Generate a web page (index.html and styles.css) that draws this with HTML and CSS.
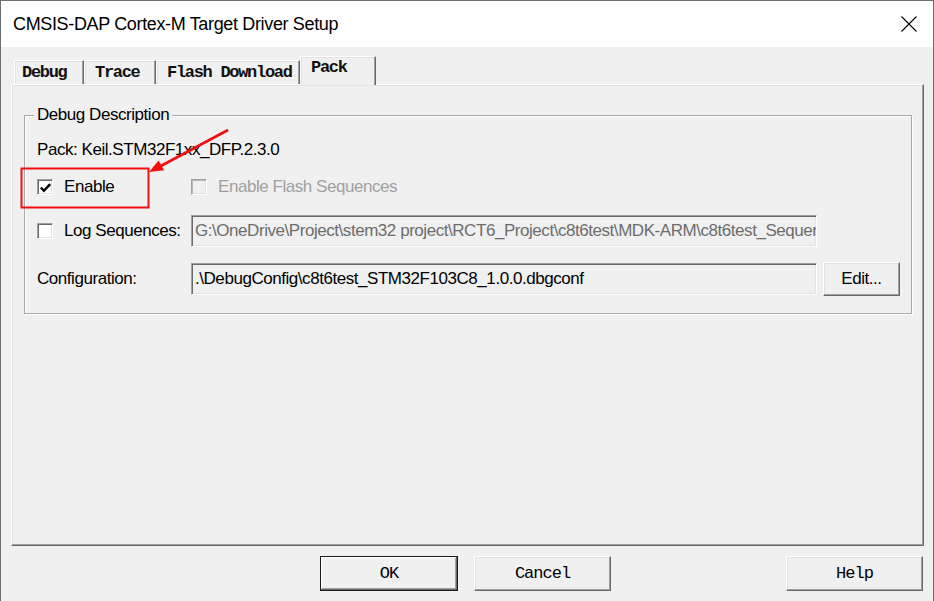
FILE: index.html
```html
<!DOCTYPE html>
<html>
<head>
<meta charset="utf-8">
<link rel="stylesheet" href="styles.css">
</head>
<body>
<div class="window">
  <div class="titlebar">
    <span class="title">CMSIS-DAP Cortex-M Target Driver Setup</span>
    <svg class="close" width="16" height="16" viewBox="0 0 16 16"><path d="M0.5 0.5 L15.5 15.5 M15.5 0.5 L0.5 15.5" stroke="#000" stroke-width="1.1" fill="none"/></svg>
  </div>
  <div class="content">
    <div class="tabs">
      <div class="tab t-debug">Debug</div>
      <div class="tab t-trace">Trace</div>
      <div class="tab t-flash">Flash Download</div>
      <div class="tab t-pack active">Pack</div>
    </div>
    <div class="panel">
      <div class="group">
        <span class="legend">Debug Description</span>
        <div class="grid">
          <div class="pack">Pack: Keil.STM32F1xx_DFP.2.3.0</div>
          <div class="check"><span class="box"><svg width="14" height="14" viewBox="0 0 14 14"><path d="M2 6.5 L5.3 10 L12 2.8" stroke="#000" stroke-width="2.6" fill="none"/></svg></span>Enable</div>
          <div class="check disabled"><span class="box"></span>Enable Flash Sequences</div>
          <div class="check"><span class="box"></span>Log Sequences:</div>
          <div class="field gray">G:\OneDrive\Project\stem32 project\RCT6_Project\c8t6test\MDK-ARM\c8t6test_Sequences.log</div>
          <div class="label">Configuration:</div>
          <div class="field">.\DebugConfig\c8t6test_STM32F103C8_1.0.0.dbgconf</div>
          <div class="btn edit">Edit...</div>
        </div>
      </div>
    </div>
    <div class="buttons">
      <div class="btn big default">OK</div>
      <div class="btn big">Cancel</div>
      <div class="btn big help">Help</div>
    </div>
  </div>
</div>
<svg class="annot" width="934" height="601" viewBox="0 0 934 601">
  <rect x="21.5" y="168.5" width="127" height="39" fill="none" stroke="#f01010" stroke-width="2"/>
  <line x1="228" y1="130" x2="158" y2="167.5" stroke="#f01010" stroke-width="2.6"/>
  <polygon points="149,172 164.2,170.2 158.6,160.6" fill="#f01010"/>
</svg>
</body>
</html>
```
FILE: styles.css
```css
html, body {
  margin: 0;
  padding: 0;
  background: #f0f0f0;
}
.window {
  width: 934px;
  height: 601px;
  box-sizing: border-box;
  border: 1px solid #6f6f6f;
  border-bottom: none;
  background: #f0f0f0;
  font-family: "Liberation Sans", Arial, sans-serif;
  color: #000;
}
.titlebar {
  height: 46px;
  background: #fff;
  display: flex;
  align-items: center;
  justify-content: space-between;
  padding: 0 16px 0 12px;
}
.title {
  font-size: 18px;
  letter-spacing: -0.35px;
}
.close {
  display: block;
  margin-top: -1px;
}
.content {
  padding: 9px 9px 0 10px;
}
.tabs {
  display: flex;
  align-items: flex-end;
  height: 28px;
  padding-left: 3px;
}
.tab {
  box-sizing: border-box;
  height: 24px;
  border-top: 1px solid #fff;
  border-left: 1px solid #fff;
  border-right: 1px solid #696969;
  box-shadow: inset -1px 0 0 #a0a0a0, inset 1px 1px 0 #e3e3e3;
  background: #f0f0f0;
  font-family: "Liberation Mono", "Courier New", monospace;
  font-weight: bold;
  font-size: 17px;
  letter-spacing: -1.3px;
  line-height: 20px;
  padding-top: 2px;
  padding-left: 10px;
  white-space: nowrap;
  color: #111;
}
.t-debug { width: 70px; padding-left: 7px; }
.t-trace { width: 72px; }
.t-flash { width: 144px; }
.t-pack { width: 76px; }
.tab.active {
  height: 29px;
  margin-bottom: -1px;
  position: relative;
  z-index: 1;
  padding-top: 1px;
}
.panel {
  box-sizing: border-box;
  height: 462px;
  border-top: 1px solid #fff;
  border-left: 1px solid #fff;
  border-right: 1px solid #696969;
  border-bottom: 1px solid #696969;
  box-shadow: inset -1px -1px 0 #a0a0a0, inset 1px 1px 0 #e3e3e3;
  padding: 30px 11px 0 12px;
}
.group {
  position: relative;
  border: 1px solid #a9a9a9;
  box-shadow: 1px 1px 0 #fff, inset 1px 1px 0 #fff;
  padding: 25px 10px 17px 12px;
  font-size: 17px;
  letter-spacing: -0.45px;
}
.legend {
  position: absolute;
  left: 9px;
  top: -10px;
  line-height: 18px;
  padding: 0 3px;
  background: #f0f0f0;
}
.grid {
  display: grid;
  grid-template-columns: 148px 626px 77px;
  grid-template-rows: 18px 26px 32px 34px;
  column-gap: 6px;
  row-gap: 15px;
  align-items: center;
}
.pack {
  grid-column: 1 / 4;
  line-height: 18px;
  white-space: nowrap;
}
.check {
  display: flex;
  align-items: center;
  white-space: nowrap;
}
.check.disabled {
  grid-column: 2 / 4;
  color: #a0a0a0;
}
.box {
  box-sizing: border-box;
  width: 16px;
  height: 16px;
  margin-right: 11px;
  background: #fff;
  border-top: 1px solid #a0a0a0;
  border-left: 1px solid #a0a0a0;
  border-right: 1px solid #fff;
  border-bottom: 1px solid #fff;
  box-shadow: inset 1px 1px 0 #696969, inset -1px -1px 0 #e3e3e3;
  display: flex;
  align-items: center;
  justify-content: center;
}
.box svg { display: block; margin: 1px 0 0 1px; }
.disabled .box {
  background: #f0f0f0;
  box-shadow: inset 1px 1px 0 #b8b8b8, inset -1px -1px 0 #e3e3e3;
}
.field {
  grid-column: 2;
  box-sizing: border-box;
  height: 32px;
  line-height: 29px;
  padding-left: 3px;
  overflow: hidden;
  white-space: nowrap;
  border-top: 1px solid #a0a0a0;
  border-left: 1px solid #a0a0a0;
  border-right: 1px solid #fff;
  border-bottom: 1px solid #fff;
  box-shadow: inset 1px 1px 0 #696969, inset -1px -1px 0 #e3e3e3;
  background: #f0f0f0;
}
.field.gray {
  color: #6d6d6d;
}
.label {
  grid-column: 1;
  white-space: nowrap;
}
.btn {
  box-sizing: border-box;
  display: flex;
  align-items: center;
  justify-content: center;
  background: #f0f0f0;
  border-top: 1px solid #fff;
  border-left: 1px solid #fff;
  border-right: 1px solid #696969;
  border-bottom: 1px solid #696969;
  box-shadow: inset -1px -1px 0 #a0a0a0, inset 1px 1px 0 #e3e3e3;
}
.edit {
  grid-column: 3;
  height: 34px;
}
.buttons {
  display: flex;
  gap: 16px;
  margin-top: 10px;
  padding-left: 309px;
  padding-right: 1px;
}
.btn.big {
  width: 137px;
  height: 35px;
  font-family: "Liberation Mono", "Courier New", monospace;
  font-size: 17px;
  letter-spacing: -1px;
}
.btn.default {
  width: 138px;
  border: 1px solid #1a1a1a;
  box-shadow: inset -1px -1px 0 #696969, inset 1px 1px 0 #fff, inset -2px -2px 0 #a0a0a0;
}
.btn.help {
  margin-left: auto;
}
.annot {
  position: absolute;
  left: 0;
  top: 0;
  pointer-events: none;
}
```
